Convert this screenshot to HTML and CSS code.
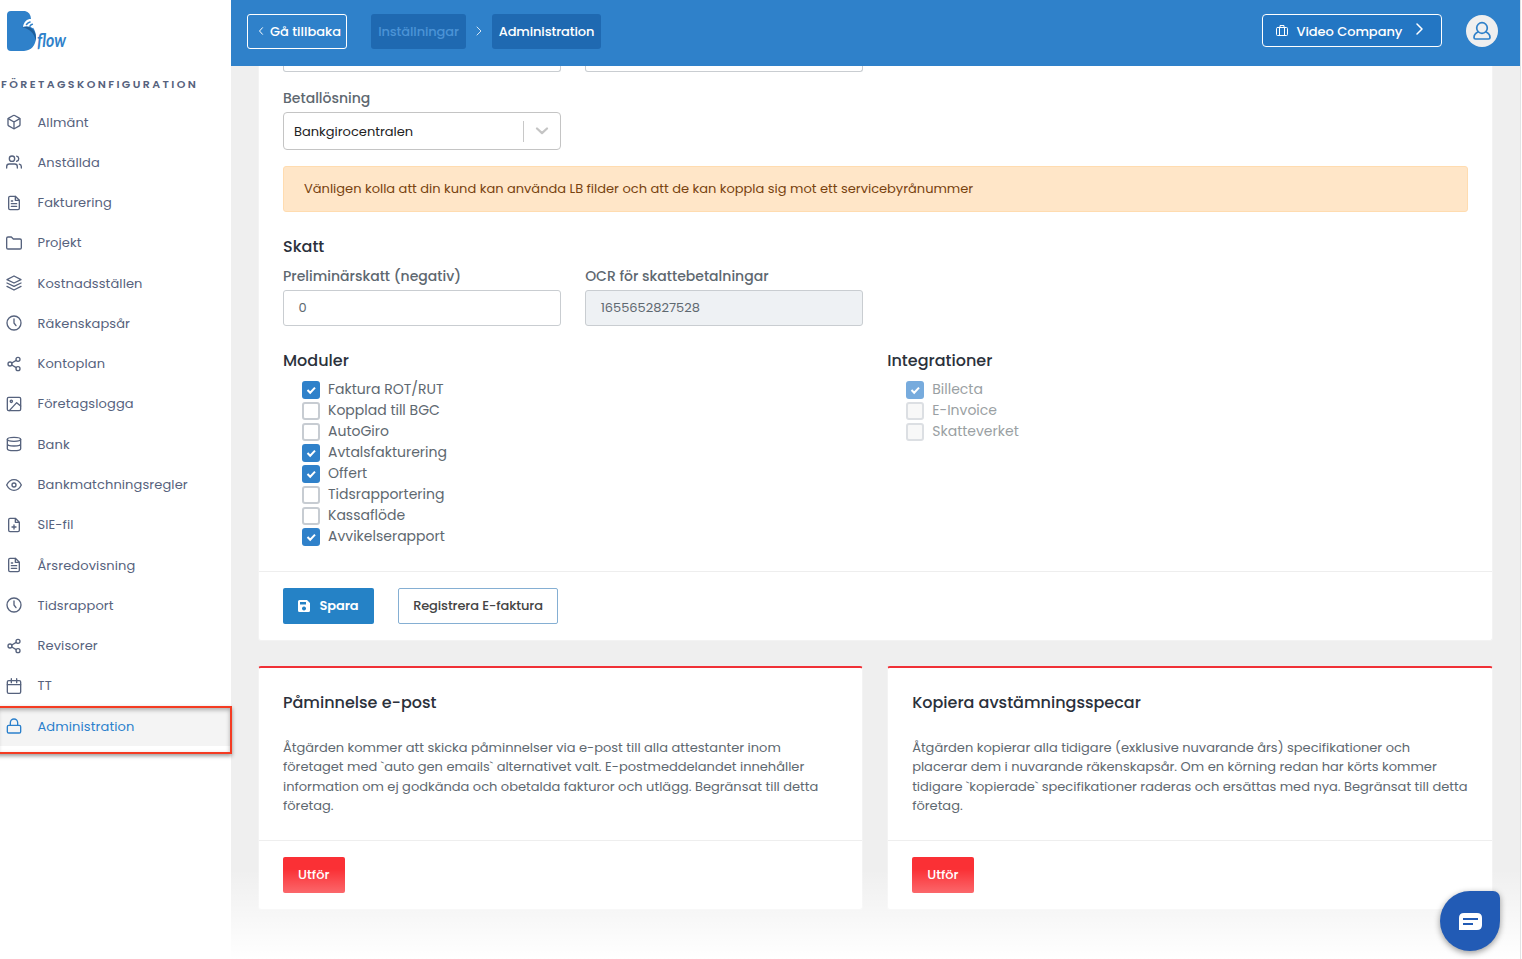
FILE: index.html
```html
<!DOCTYPE html>
<html lang="sv">
<head>
<meta charset="utf-8">
<title>Bflow – Administration</title>
<link rel="stylesheet" href="styles.css">
</head>
<body>
<svg class="defs" width="0" height="0" aria-hidden="true">
  <symbol id="file" viewBox="0 0 24 24"><path d="M14 2H6a2 2 0 0 0-2 2v16a2 2 0 0 0 2 2h12a2 2 0 0 0 2-2V8z"/><path d="M14 2v6h6M16 13H8M16 17H8M10 9H8"/></symbol>
  <symbol id="clock" viewBox="0 0 24 24"><circle cx="12" cy="12" r="10.500"/><path d="M12 6v6l3 4"/></symbol>
  <symbol id="share" viewBox="0 0 24 24"><circle cx="18" cy="5" r="3"/><circle cx="6" cy="12" r="3"/><circle cx="18" cy="19" r="3"/><path d="M8.6 13.5l6.8 4M15.4 6.5l-6.8 4"/></symbol>
  <symbol id="check" viewBox="0 0 18 18"><path class="tick" d="M5.500 9l2.700 2.700 4.800-5.100"/></symbol>
</svg>
<div class="app">
  <aside class="sidebar">
    <svg class="logo" width="80" height="48" viewBox="0 0 80 48">
      <path d="M5 0H19Q24.500 1 25 8L26 15C29 19 30 22 30 27Q29 39 18 40H5Q1 40 1 36V4Q1 0 5 0Z" fill="#2f81ca"/>
      <path d="M16 16C25 14 31 20 30 30C28 22 24 18 16 16Z" fill="#1d5e9b"/>
      <path d="M17 16C18 10 22 7.500 26 8.200L28 9L27.500 17.500Q22 14 17 16Z" fill="#fff"/>
      <path d="M20.500 13.500Q22 11.500 24 11M24 15.200Q24.800 13.700 26.300 13.300" class="logo-wave"/>
      <text class="logo-text" x="31" y="36" textLength="29" lengthAdjust="spacingAndGlyphs">flow</text>
    </svg>
    <h2 class="nav-title">FÖRETAGSKONFIGURATION</h2>
    <nav class="nav">
      <a class="nav-item"><svg class="icon" viewBox="0 0 24 24"><path d="M21 16V8a2 2 0 0 0-1-1.730l-7-4a2 2 0 0 0-2 0l-7 4A2 2 0 0 0 3 8v8a2 2 0 0 0 1 1.730l7 4a2 2 0 0 0 2 0l7-4A2 2 0 0 0 21 16z"/><path d="M3.300 7L12 12l8.700-5M12 22V12"/></svg><span>Allmänt</span></a>
      <a class="nav-item"><svg class="icon" viewBox="0 0 24 24"><path d="M17 21v-2a4 4 0 0 0-4-4H5a4 4 0 0 0-4 4v2M23 21v-2a4 4 0 0 0-3-3.900M16 3.100a4 4 0 0 1 0 7.800"/><circle cx="9" cy="7" r="4"/></svg><span>Anställda</span></a>
      <a class="nav-item"><svg class="icon"><use href="#file"/></svg><span>Fakturering</span></a>
      <a class="nav-item"><svg class="icon" viewBox="0 0 24 24"><path d="M23 19a2 2 0 0 1-2 2H3a2 2 0 0 1-2-2V5a2 2 0 0 1 2-2h5l3 3h10a2 2 0 0 1 2 2z"/></svg><span>Projekt</span></a>
      <a class="nav-item"><svg class="icon" viewBox="0 0 24 24"><path d="M12 1.500L1.500 7 12 12l10.500-5zM1.500 17L12 22.500 22.500 17M1.500 12L12 17l10.500-5"/></svg><span>Kostnadsställen</span></a>
      <a class="nav-item"><svg class="icon"><use href="#clock"/></svg><span>Räkenskapsår</span></a>
      <a class="nav-item"><svg class="icon"><use href="#share"/></svg><span>Kontoplan</span></a>
      <a class="nav-item"><svg class="icon" viewBox="0 0 24 24"><rect x="2" y="2" width="20" height="20" rx="2"/><circle cx="8" cy="8" r="1.700"/><path d="M22 15l-6-5L5 22"/></svg><span>Företagslogga</span></a>
      <a class="nav-item"><svg class="icon" viewBox="0 0 24 24"><ellipse cx="12" cy="5" rx="10" ry="3"/><path d="M22 12c0 1.700-4 3-10 3S2 13.700 2 12M2 5v14c0 1.700 4 3 10 3s10-1.300 10-3V5"/></svg><span>Bank</span></a>
      <a class="nav-item"><svg class="icon" viewBox="0 0 24 24"><path d="M1 12s4-8 11-8 11 8 11 8-4 8-11 8S1 12 1 12z"/><circle cx="12" cy="12" r="3"/></svg><span>Bankmatchningsregler</span></a>
      <a class="nav-item"><svg class="icon" viewBox="0 0 24 24"><path d="M14 2H6a2 2 0 0 0-2 2v16a2 2 0 0 0 2 2h12a2 2 0 0 0 2-2V8zM14 2v6h6M12 18v-6M9 15h6"/></svg><span>SIE-fil</span></a>
      <a class="nav-item"><svg class="icon"><use href="#file"/></svg><span>Årsredovisning</span></a>
      <a class="nav-item"><svg class="icon"><use href="#clock"/></svg><span>Tidsrapport</span></a>
      <a class="nav-item"><svg class="icon"><use href="#share"/></svg><span>Revisorer</span></a>
      <a class="nav-item"><svg class="icon" viewBox="0 0 24 24"><rect x="2" y="4" width="20" height="19" rx="2"/><path d="M16 1v6M8 1v6M2 10h20"/></svg><span>TT</span></a>
      <a class="nav-item active"><svg class="icon" viewBox="0 0 24 24"><rect x="2" y="11" width="20" height="11.500" rx="2"/><path d="M6.500 11V7a5.500 5.500 0 0 1 11 0v4"/></svg><span>Administration</span></a>
    </nav>
    <div class="highlight"></div>
  </aside>

  <div class="page">
    <header class="topbar">
      <button class="back"><svg width="6" height="8" viewBox="0 0 6 8"><path d="M4.500 .7L1.500 4l3 3.300"/></svg><span>Gå tillbaka</span></button>
      <span class="crumb muted">Inställningar</span>
      <svg class="sep" width="6" height="10" viewBox="0 0 6 10"><path d="M1 1l4 4-4 4"/></svg>
      <span class="crumb">Administration</span>
      <button class="company"><svg width="12" height="11" viewBox="0 0 12 11"><rect x=".5" y="2.500" width="11" height="8" rx="1"/><path d="M3.500 2.500v8M8.500 2.500v8M4 2.500V.5h4v2"/></svg><span>Video Company</span><svg class="chev" width="7" height="12" viewBox="0 0 7 12"><path d="M1 1l5 5-5 5"/></svg></button>
      <span class="avatar"><svg width="20" height="20" viewBox="0 0 20 20"><circle cx="10" cy="7" r="5.300"/><path d="M5.800 11C3 12.500 2 14.500 2 16.500Q2 18 3.500 18h13Q18 18 18 16.500C18 14.500 17 12.500 14.200 11"/></svg></span>
    </header>

    <main class="content">
      <section class="card settings">
        <div class="card-body">
          <div class="grid4"><div class="cut"></div><div class="cut"></div></div>
          <label class="label pay">Betallösning</label>
          <div class="grid4"><div class="select"><span>Bankgirocentralen</span><i class="bar"></i><svg width="14" height="8" viewBox="0 0 14 8"><path d="M2 1.500l5 4.600 5-4.600"/></svg></div></div>
          <div class="alert">Vänligen kolla att din kund kan använda LB filder och att de kan koppla sig mot ett servicebyrånummer</div>
          <h3 class="heading tax">Skatt</h3>
          <div class="grid4 fields">
            <div><label class="label">Preliminärskatt (negativ)</label><div class="input">0</div></div>
            <div><label class="label">OCR för skattebetalningar</label><div class="input disabled">1655652827528</div></div>
          </div>
          <div class="grid2">
            <div>
              <h3 class="heading">Moduler</h3>
              <ul class="checks">
                <li><svg class="box on"><use href="#check"/></svg>Faktura ROT/RUT</li>
                <li><span class="box"></span>Kopplad till BGC</li>
                <li><span class="box"></span>AutoGiro</li>
                <li><svg class="box on"><use href="#check"/></svg>Avtalsfakturering</li>
                <li><svg class="box on"><use href="#check"/></svg>Offert</li>
                <li><span class="box"></span>Tidsrapportering</li>
                <li><span class="box"></span>Kassaflöde</li>
                <li><svg class="box on"><use href="#check"/></svg>Avvikelserapport</li>
              </ul>
            </div>
            <div>
              <h3 class="heading">Integrationer</h3>
              <ul class="checks off">
                <li><svg class="box on"><use href="#check"/></svg>Billecta</li>
                <li><span class="box"></span>E-Invoice</li>
                <li><span class="box"></span>Skatteverket</li>
              </ul>
            </div>
          </div>
        </div>
        <footer class="card-foot">
          <button class="btn save"><svg width="12" height="12" viewBox="0 0 12 12"><path fill="#fff" fill-rule="evenodd" d="M1.500 0H9l3 3v7.500Q12 12 10.500 12h-9Q0 12 0 10.500v-9Q0 0 1.500 0zM2 2v2.500h6V2zM6 6.500a2 2 0 1 0 .01 0z"/></svg>Spara</button>
          <button class="btn outline">Registrera E-faktura</button>
        </footer>
      </section>

      <div class="actions">
        <section class="card action">
          <div class="card-body">
            <h3 class="heading">Påminnelse e-post</h3>
            <p>Åtgärden kommer att skicka påminnelser via e-post till alla attestanter inom<br>företaget med `auto gen emails` alternativet valt. E-postmeddelandet innehåller<br>information om ej godkända och obetalda fakturor och utlägg. Begränsat till detta<br>företag.</p>
          </div>
          <footer class="card-foot"><button class="btn danger">Utför</button></footer>
        </section>
        <section class="card action">
          <div class="card-body">
            <h3 class="heading">Kopiera avstämningsspecar</h3>
            <p>Åtgärden kopierar alla tidigare (exklusive nuvarande års) specifikationer och<br>placerar dem i nuvarande räkenskapsår. Om en körning redan har körts kommer<br>tidigare `kopierade` specifikationer raderas och ersättas med nya. Begränsat till detta<br>företag.</p>
          </div>
          <footer class="card-foot"><button class="btn danger">Utför</button></footer>
        </section>
      </div>
    </main>
    <div class="fade"></div>
    <button class="chat" aria-label="Chatt"><svg width="23" height="17" viewBox="0 0 23 17"><path d="M5 0h13q5 0 5 5v7q0 5-5 5H0V5q0-5 5-5z" fill="#fff"/><path class="chat-lines" d="M4 6h15M4 11h10"/></svg></button>
  </div>
</div>
</body>
</html>
```
FILE: styles.css
```css
* { box-sizing: border-box; }
body {
  margin: 0;
  height: 959px;
  overflow: hidden;
  background: #fff;
  color: #5e6870;
  font: 13px/20px Poppins, Inter, "Open Sans", sans-serif;
}
h2, h3, p, ul { margin: 0; padding: 0; }
button { font: inherit; letter-spacing: inherit; padding: 0; }
svg { flex: none; fill: none; stroke: currentColor; stroke-linecap: round; stroke-linejoin: round; }
.defs { position: absolute; }
.app { display: flex; height: 959px; width: 1521px; border-right: 1px solid #e2e3e4; }

/* Sidebar */
.sidebar { position: relative; width: 231px; flex: none; background: #fff; color: #56627d; }
.logo { display: block; margin: 11px 0 0 6px; stroke: none; }
.logo-text { font: italic 700 19px Lato, sans-serif; fill: #2f81ca; }
.logo-wave { stroke: #2f81ca; stroke-width: 1.6; }
.nav-title { margin: 15px 0 8px 1px; font-size: 11px; line-height: 20px; font-weight: 600; letter-spacing: 2.4px; white-space: nowrap; }
.nav-item { display: flex; align-items: center; gap: 15.5px; height: 40.27px; padding-left: 6px; letter-spacing: .11px; }
.nav-item span { padding-top: 1px; }
.icon { width: 16px; height: 16px; stroke-width: 2; }
.nav-item.active { background: #f4f4f4; color: #2b80cc; }
.highlight { position: absolute; left: -4px; top: 706px; width: 236px; height: 48px; border: 2px solid #f43b22; box-shadow: 0 2px 4px rgba(0,0,0,.4), inset 0 2px 4px rgba(0,0,0,.3); z-index: 3; }

/* Top bar */
.page { position: relative; flex: 1; min-width: 0; background: #efefef; }
.topbar { display: flex; align-items: center; height: 66px; padding: 0 22px 4px 16px; background: #2f81ca; color: #fff; font-weight: 500; }
.back { display: flex; align-items: center; gap: 6px; width: 100px; height: 35px; padding-left: 10px; border: 1px solid #fff; border-radius: 3px; background: none; color: #fff; }
.back span { padding-top: 1px; }
.crumb { width: 109px; height: 35px; border-radius: 3px; background: #1f69b1; line-height: 35px; text-align: center; letter-spacing: -.12px; }
.crumb.muted { width: 95px; margin-left: 24px; color: #4b93d6; }
.sep { margin: 0 10px; opacity: .8; }
.company { display: flex; align-items: center; width: 180px; height: 33px; margin: 0 0 1px auto; padding-left: 13px; border: 1px solid #fff; border-radius: 4px; background: #2376c3; color: #fff; }
.company span { width: 107px; margin-left: 8.5px; padding-top: 2px; text-align: left; letter-spacing: -.05px; }
.chev { margin: 0 0 3px 12px; stroke-width: 1.5; }
.avatar { display: grid; place-items: center; width: 32px; height: 32px; margin-left: 24px; border-radius: 50%; background: #efefef; color: #2f81ca; }
.avatar svg { stroke-width: 1.7; }

/* Cards */
.content { padding: 0 27.5px 0 27px; }
.card { background: #fff; border: 1px solid #f3f3f3; border-radius: 3px; }
.card-body { padding: 0 24px; }
.card-foot { display: flex; gap: 24px; padding: 16px 24px; border-top: 1px solid #eee; }
.settings { height: 575px; border-top: 0; border-radius: 0 0 3px 3px; }
.settings .card-body { height: 505px; }
.grid4 { display: grid; grid-template-columns: repeat(4, 1fr); gap: 24px; }
.grid2 { display: grid; grid-template-columns: 1fr 1fr; gap: 24px; padding-top: 24px; }
.cut { height: 6px; border: 1px solid #c9cdd1; border-top: 0; border-radius: 0 0 3px 3px; }
.label { display: block; height: 24px; font-size: 14px; line-height: 20px; font-weight: 500; }
.pay { margin-top: 16px; }
.select { display: flex; align-items: center; height: 38px; padding: 0 11px 0 10px; border: 1px solid #c4c4c4; border-radius: 4px; color: #222; }
.select span { padding-top: 1px; }
.bar { width: 1px; height: 21px; margin: 0 11px 0 auto; background: #c8c8c8; }
.select svg { color: #c4c4c4; stroke-width: 2.2; }
.alert { height: 46px; margin-top: 16px; padding-left: 20px; border: 1px solid #ffdcb0; border-radius: 3px; background: #ffe6c8; color: #784310; line-height: 44px; white-space: nowrap; }
.heading { color: #2b313b; font-size: 16px; line-height: 22px; font-weight: 500; }
.tax { margin: 24px 0 8px; }
.input { height: 36px; padding-left: 14.5px; border: 1px solid #c9cdd1; border-radius: 3px; line-height: 33px; }
.input.disabled { background: #eef1f4; }
.checks { list-style: none; padding: 7px 0 0 19px; font-size: 14px; }
.checks li { display: flex; align-items: center; gap: 8px; height: 21px; line-height: 19px; padding-bottom: 1px; }
.box { flex: none; width: 18px; height: 18px; margin-top: 2px; border: 2px solid #c7ccd2; border-radius: 3px; }
.box.on { border: 0; background: #2f81ca; }
.tick { stroke: #fff; stroke-width: 2; stroke-linecap: butt; stroke-linejoin: miter; }
.off { color: #9a9fa3; }
.off .box { border-color: #dcdfe3; background: #f8f8f8; }
.off .box.on { background: #77abdd; }

/* Buttons */
.btn { display: flex; align-items: center; justify-content: center; height: 36px; border: 0; border-radius: 2px; font-weight: 500; }
.save { width: 91px; gap: 9px; background: #2582c6; color: #fff; font-weight: 600; letter-spacing: -.1px; }
.save svg { stroke: none; }
.outline { width: 160px; border: 1px solid #85afd3; background: #fff; color: #444; letter-spacing: -.13px; }
.danger { width: 61.5px; background: #fa3035; color: #fff; }

/* Action cards */
.actions { display: grid; grid-template-columns: 1fr 1fr; gap: 24.5px; margin-top: 25px; }
.action { height: 244px; border-top: 2px solid #f03036; }
.action .card-body { height: 172px; padding-top: 24px; }
.action p { padding-top: 23.6px; line-height: 19.5px; white-space: nowrap; }

/* Floating layers */
.fade { position: absolute; left: 0; right: 0; bottom: 0; height: 90px; background: linear-gradient(rgba(255,255,255,0), #fff); }
.chat { position: absolute; right: 20px; bottom: 8px; display: grid; place-items: center; width: 60px; height: 60px; border: 0; border-radius: 30px 7px 30px 30px; background: #225bb5; box-shadow: 0 2px 6px rgba(0,0,0,.4); }
.chat svg { margin: 1px 0 0 1px; stroke: none; }
.chat .chat-lines { stroke: #225bb5; stroke-width: 2; stroke-linecap: butt; }
```
